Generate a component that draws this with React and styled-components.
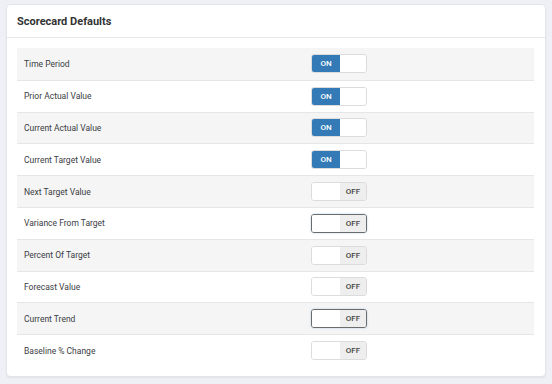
import React from "react";
import styled, { createGlobalStyle } from "styled-components";

const GlobalStyle = createGlobalStyle`
  html, body {
    margin: 0;
    padding: 0;
    background: #eef0f5;
    font-family: Roboto, "Liberation Sans", sans-serif;
    color: #333;
  }
`;

const settings = [
  { label: "Time Period", on: true },
  { label: "Prior Actual Value", on: true },
  { label: "Current Actual Value", on: true },
  { label: "Current Target Value", on: true },
  { label: "Next Target Value", on: false },
  { label: "Variance From Target", on: false, focused: true },
  { label: "Percent Of Target", on: false },
  { label: "Forecast Value", on: false },
  { label: "Current Trend", on: false, focused: true },
  { label: "Baseline % Change", on: false },
];

const Toggle = ({ on, focused }) => (
  <Switch $focused={focused}>
    <Half $active={on} $side="on">{on ? "ON" : ""}</Half>
    <Half $active={!on} $side="off">{on ? "" : "OFF"}</Half>
  </Switch>
);

const App = () => {
  return (
    <Page>
      <GlobalStyle />
      <Card>
        <Header>
          <h2>Scorecard Defaults</h2>
        </Header>
        <Body>
          <Table>
            {settings.map((s, i) => (
              <Row key={s.label} $striped={i % 2 === 0}>
                <Label>{s.label}</Label>
                <Cell>
                  <Toggle on={s.on} focused={s.focused} />
                </Cell>
              </Row>
            ))}
          </Table>
        </Body>
      </Card>
    </Page>
  );
};

const Page = styled.div`
  width: 552px;
  height: 384px;
  box-sizing: border-box;
  padding: 4px 6px 0 6px;
`;

const Card = styled.div`
  width: 540px;
  box-sizing: border-box;
  background: #fff;
  border: 1px solid #e3e5ea;
  border-radius: 4px;
  box-shadow: 0 1px 2px rgba(0, 0, 0, 0.06);
`;

const Header = styled.div`
  height: 32px;
  display: flex;
  align-items: center;
  padding: 0 10px;
  border-bottom: 1px solid #e8e8e8;
  h2 {
    margin: 0;
    font-size: 11px;
    font-weight: 700;
    color: #333;
  }
`;

const Body = styled.div`
  padding: 10px 11px 10px 10px;
`;

const Table = styled.div`
  display: flex;
  flex-direction: column;
`;

const Row = styled.div`
  height: 31.8px;
  box-sizing: border-box;
  display: grid;
  grid-template-columns: 294px 1fr;
  align-items: center;
  background: ${(p) => (p.$striped ? "#f5f5f5" : "#fff")};
  border-top: 1px solid #e6e6e6;
  &:first-child {
    border-top: none;
  }
`;

const Label = styled.div`
  padding-left: 7px;
  font-size: 8.5px;
  color: #3a3d44;
`;

const Cell = styled.div`
  display: flex;
  align-items: center;
`;

const Switch = styled.div`
  display: flex;
  width: 56px;
  height: 19px;
  box-sizing: border-box;
  border: 1px solid ${(p) => (p.$focused ? "#6b6b6b" : "#dcdcdc")};
  border-radius: 3px;
  overflow: hidden;
  box-shadow: ${(p) => (p.$focused ? "0 0 2px rgba(102, 175, 233, 0.6)" : "none")};
`;

const Half = styled.div`
  flex: ${(p) => (p.$side === "on" ? "0 0 28px" : "1")};
  display: flex;
  align-items: center;
  justify-content: center;
  font-size: 8px;
  font-weight: 500;
  background: ${(p) =>
    p.$active ? (p.$side === "on" ? "#337ab7" : "#eeeeee") : "#fff"};
  color: ${(p) => (p.$side === "on" ? "#fff" : "#444")};
`;

export default App;
